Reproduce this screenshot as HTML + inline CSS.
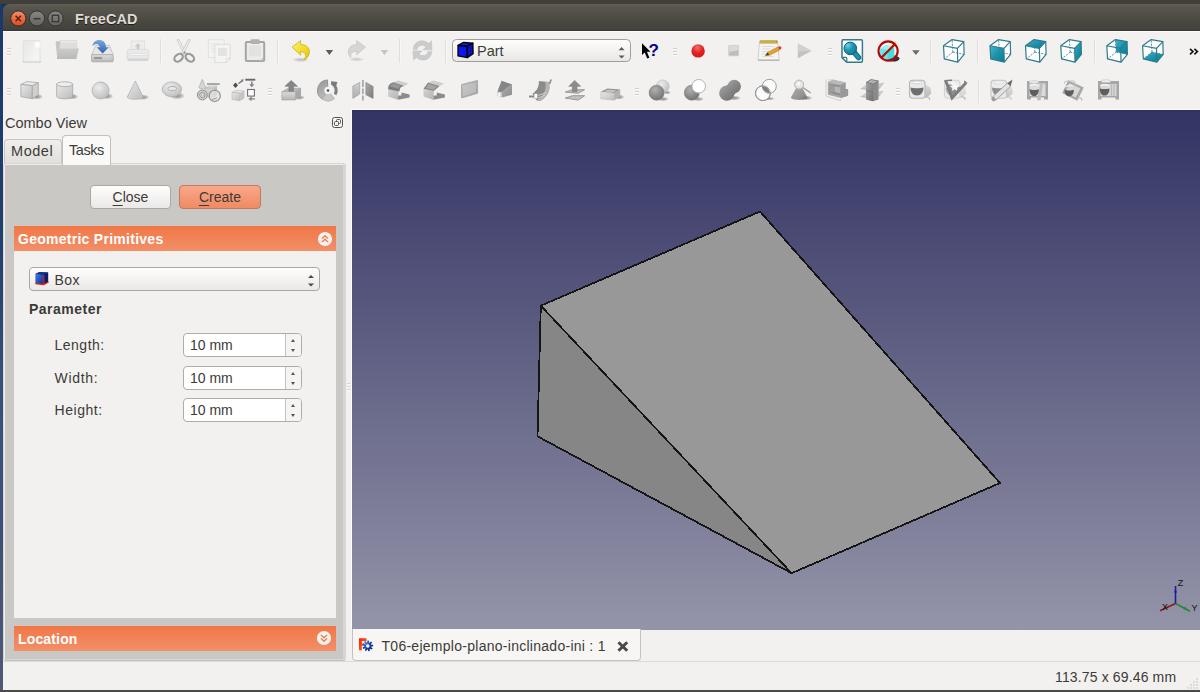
<!DOCTYPE html>
<html>
<head>
<meta charset="utf-8">
<title>FreeCAD</title>
<style>
html,body{margin:0;padding:0;}
body{width:1200px;height:692px;overflow:hidden;background:#f2f1f0;position:relative;font-family:"Liberation Sans","DejaVu Sans",sans-serif;font-size:14px;color:#3c3b37;}
.abs{position:absolute;}
#desk-top{left:0;top:0;width:1200px;height:12px;background:linear-gradient(#403f3a 0,#403f3a 4px,#1a2b4d 4px,#17325f 12px);}
#desk-left{left:0;top:4px;width:3px;height:688px;background:linear-gradient(#1a386a 0%,#21406f 35%,#34507e 55%,#3f5078 78%,#4e5a78 100%);}
#titlebar{left:3px;top:4px;width:1197px;height:27px;background:linear-gradient(#625f53 0,#5a574f 2px,#4d4b44 14px,#43423d 25px,#353430 27px);border-top-left-radius:6px;}
#title{left:75px;top:9.6px;font-weight:bold;font-size:14.4px;color:#dfdbd2;letter-spacing:0.15px;line-height:18px;text-shadow:0 1px 0 rgba(0,0,0,.6);}
.wbtn{width:15px;height:15px;border-radius:50%;top:11px;}
#win{left:3px;top:31px;width:1197px;height:659px;background:#f2f1f0;border-top:1px solid #fbfbfa;box-sizing:border-box;}
#desk-bottom{left:0;top:690px;width:1200px;height:2px;background:#4a4a48;}
/* 3D view */
#view{left:352px;top:110px;width:848px;height:519.500px;background:linear-gradient(#2e2e60 0,#333364 2px,#9494a9 100%);}
#viewborder{left:351px;top:109px;width:849px;height:520px;background:#fbfbfb;}
/* panel */
#frame{left:3px;top:163px;width:343px;height:498px;background:#d8d6d3;border-radius:3px;}
#frame2{left:4px;top:164px;width:339px;height:494.5px;background:#efeeed;border-radius:2px 0 0 0;}
#frame3{left:5px;top:165px;width:338px;height:493.5px;background:#cac8c5;}
#frame4{left:5px;top:660px;width:340px;height:1px;background:#c4c2bf;}
.hdr{left:14px;width:322px;height:25px;background:linear-gradient(#f07746 0%,#f38f68 100%);color:#fff;font-weight:bold;font-size:14px;line-height:24px;}
.hdr span{position:absolute;left:4px;top:1px;letter-spacing:.27px;}
#body1{left:14px;top:251px;width:322px;height:367px;background:#f2f1f0;}
.btn u{text-underline-offset:2.500px;text-decoration-thickness:1px;}
.btn{box-sizing:border-box;height:24px;border:1px solid #aba8a4;border-radius:4px;text-align:center;line-height:22px;font-size:14px;}
.lbl{font-size:14px;line-height:16px;white-space:nowrap;}
.spin{left:183px;width:119px;height:24px;box-sizing:border-box;border:1px solid #b0ada9;border-radius:4px;background:#fff;}
.spin i{position:absolute;right:0;top:0;width:15px;height:22px;border-left:1px solid #c4c1be;background:#f5f4f3;border-radius:0 3px 3px 0;}
.spin i:before{content:"";position:absolute;left:5px;top:5px;border:2.5px solid transparent;border-top:none;border-bottom:3px solid #55534f;}
.spin i:after{content:"";position:absolute;left:5px;top:15px;border:2.5px solid transparent;border-bottom:none;border-top:3px solid #55534f;}
.spin span{position:absolute;left:6px;top:3px;font-size:14px;line-height:16px;}
</style>
</head>
<body>
<div class="abs" id="desk-top"></div>
<div class="abs" id="desk-left"></div>
<div class="abs" id="titlebar"></div>
<div class="abs" id="win"></div>
<div class="abs" id="desk-bottom"></div>

<!-- window buttons -->
<svg class="abs" style="left:8px;top:8px" width="60" height="22" viewBox="0 0 60 22">
  <defs>
    <linearGradient id="gc" x1="0" y1="0" x2="0" y2="1"><stop offset="0" stop-color="#f58d6e"/><stop offset="1" stop-color="#de4c1c"/></linearGradient>
    <linearGradient id="gg" x1="0" y1="0" x2="0" y2="1"><stop offset="0" stop-color="#8a8984"/><stop offset="1" stop-color="#63625d"/></linearGradient>
  </defs>
  <circle cx="10.3" cy="10.5" r="7.6" fill="url(#gc)" stroke="#3a2a22" stroke-width="1"/>
  <path d="M7.6 7.8l5.4 5.4M13 7.8l-5.4 5.4" stroke="#5b2310" stroke-width="1.6" fill="none"/>
  <circle cx="29" cy="10.5" r="7.6" fill="url(#gg)" stroke="#33322e" stroke-width="1"/>
  <path d="M25.5 10.7h7" stroke="#3c3b37" stroke-width="1.6"/>
  <circle cx="47.5" cy="10.5" r="7.6" fill="url(#gg)" stroke="#33322e" stroke-width="1"/>
  <rect x="44.3" y="7.3" width="6.4" height="6.4" fill="none" stroke="#3c3b37" stroke-width="1.4"/>
</svg>
<div class="abs" id="title">FreeCAD</div>

<!-- TOOLBARS -->
<svg class="abs" style="left:0;top:31px" width="1200" height="79" viewBox="0 31 1200 79">
<defs>
  <linearGradient id="gL" x1="0" y1="0" x2="1" y2="1"><stop offset="0" stop-color="#e8e8e8"/><stop offset="1" stop-color="#bcbcbc"/></linearGradient>
  <linearGradient id="gV" x1="0" y1="0" x2="0" y2="1"><stop offset="0" stop-color="#dcdcdc"/><stop offset="1" stop-color="#b4b4b4"/></linearGradient>
  <linearGradient id="gM" x1="0" y1="0" x2="1" y2="1"><stop offset="0" stop-color="#c6c6c6"/><stop offset="1" stop-color="#959595"/></linearGradient>
  <linearGradient id="gD" x1="0" y1="0" x2="1" y2="1"><stop offset="0" stop-color="#a6a6a6"/><stop offset="1" stop-color="#6e6e6e"/></linearGradient>
  <radialGradient id="sL" cx=".38" cy=".32" r=".75"><stop offset="0" stop-color="#ececec"/><stop offset="1" stop-color="#bdbdbd"/></radialGradient>
  <radialGradient id="sD" cx=".4" cy=".3" r=".8"><stop offset="0" stop-color="#b0b0b0"/><stop offset="1" stop-color="#6c6c6c"/></radialGradient>
  <radialGradient id="sT" cx=".3" cy=".25" r=".9"><stop offset="0" stop-color="#6fd0ee"/><stop offset=".45" stop-color="#1f97b2"/><stop offset="1" stop-color="#0c7890"/></radialGradient>
  <radialGradient id="sR" cx=".45" cy=".25" r=".8"><stop offset="0" stop-color="#ee7070"/><stop offset=".5" stop-color="#e32424"/><stop offset="1" stop-color="#d81414"/></radialGradient>
  <radialGradient id="shd" cx=".5" cy=".5" r=".5"><stop offset="0" stop-color="#000" stop-opacity=".42"/><stop offset=".55" stop-color="#000" stop-opacity=".25"/><stop offset="1" stop-color="#000" stop-opacity="0"/></radialGradient>
  <linearGradient id="gPg" x1="0" y1="0" x2="1" y2="1"><stop offset="0" stop-color="#e6e6e6"/><stop offset="1" stop-color="#f8f8f7"/></linearGradient>
  <linearGradient id="gBl" x1="0" y1="0" x2="0" y2="1"><stop offset="0" stop-color="#7aa7dc"/><stop offset="1" stop-color="#2f62ab"/></linearGradient>
  <linearGradient id="gYl" x1="0" y1="0" x2="1" y2="1"><stop offset="0" stop-color="#f8f088"/><stop offset=".55" stop-color="#f0dc2c"/><stop offset="1" stop-color="#dcc210"/></linearGradient>
  <linearGradient id="gCb" x1="0" y1="0" x2="0" y2="1"><stop offset="0" stop-color="#fefefe"/><stop offset="1" stop-color="#e9e7e5"/></linearGradient>
  <linearGradient id="gFu" gradientUnits="userSpaceOnUse" x1="722" y1="82" x2="738" y2="100"><stop offset="0" stop-color="#a8a8a8"/><stop offset=".5" stop-color="#858585"/><stop offset="1" stop-color="#6a6a6a"/></linearGradient>
  <linearGradient id="gRv" gradientUnits="userSpaceOnUse" x1="318" y1="82" x2="328" y2="100"><stop offset="0" stop-color="#9a9a9a"/><stop offset="1" stop-color="#c2c2c2"/></linearGradient>
  <radialGradient id="glow" cx=".5" cy=".5" r=".5"><stop offset="0" stop-color="#fff" stop-opacity="1"/><stop offset=".45" stop-color="#fff" stop-opacity=".8"/><stop offset="1" stop-color="#fff" stop-opacity="0"/></radialGradient>
  <g id="hd"><rect x="0" y="0" width="4" height="1" fill="#d2cfcc"/><rect x="0" y="1" width="4" height="1" fill="#fafaf9"/><rect x="0" y="3" width="4" height="1" fill="#d2cfcc"/><rect x="0" y="4" width="4" height="1" fill="#fafaf9"/><rect x="0" y="6" width="4" height="1" fill="#d2cfcc"/><rect x="0" y="7" width="4" height="1" fill="#fafaf9"/></g>
  <g id="sp"><rect x="0" y="0" width="1" height="24" fill="#dfdedc"/><rect x="1" y="0" width="1" height="24" fill="#f8f7f6"/></g>
  <!-- cube wire: local coords origin at icon top-left -->
  <g id="cw" fill="none" stroke="#2f7b8b" stroke-width="1.200" stroke-linejoin="round">
    <path d="M11.6 13.1L10.8 .6M11.6 13.1L2.95 19.9M11.6 13.1L22.8 15.4" stroke-width=".9" stroke-dasharray="2 1.2" stroke="#3f8797"/>
    <path d="M2.2 6.75L16.1 9.4L16.45 23.1L2.95 19.9Z"/>
    <path d="M2.2 6.75L10.8 .6L22.45 2.6L16.1 9.4"/>
    <path d="M22.45 2.6L22.8 15.4L16.45 23.1"/>
  </g>
  <path id="cbg" d="M2.2 6.75L10.8 .6L22.45 2.6L22.8 15.4L16.45 23.1L2.95 19.9Z" fill="#fff"/>
  <linearGradient id="gT" x1="0" y1="0" x2="1" y2="1"><stop offset="0" stop-color="#45b4d2"/><stop offset=".5" stop-color="#1a93ae"/><stop offset="1" stop-color="#0b7b93"/></linearGradient>
</defs>

<!-- ================= TOOLBAR 1 ================= -->
<use href="#hd" x="7" y="48"/>
<use href="#hd" x="673" y="48"/>
<use href="#hd" x="828" y="48"/>
<use href="#sp" x="160" y="39"/><use href="#sp" x="277" y="39"/><use href="#sp" x="399" y="39"/><use href="#sp" x="445" y="39"/>
<use href="#sp" x="930" y="39"/><use href="#sp" x="977" y="39"/><use href="#sp" x="1094" y="39"/>

<!-- new -->
<g>
  <rect x="22.5" y="61" width="18.5" height="1.6" rx=".8" fill="#c9c9c9"/>
  <rect x="23.4" y="40.6" width="16.6" height="20.8" rx="1" fill="url(#gPg)" stroke="#dedede" stroke-width=".9"/>
  <circle cx="37.600" cy="44.800" r="4.200" fill="url(#glow)"/>
</g>
<!-- open -->
<g>
  <path d="M55.6 42.2q0-1 1-1h4l1 1.4h15v15H57.2z" fill="#c6c5c3"/>
  <path d="M60.6 40.6h16.2v9h-17z" fill="#ececeb" stroke="#d2d2d0" stroke-width=".7"/>
  <path d="M61.5 42.5h14.5v6h-15z" fill="#dededd"/>
  <path d="M59.4 48.4h19.4l-2.6 10.6H56.9z" fill="url(#gV)"/>
  <path d="M59.4 48.4h19.4l-2.6 10.6H56.9z" fill="#bebdbb" opacity=".55"/>
</g>
<!-- save -->
<g>
  <path d="M95.8 45.4h13.6l3.8 9.4H91.6z" fill="#e7e7e7" stroke="#bdbdbd" stroke-width=".8"/>
  <rect x="91.5" y="54.6" width="21.8" height="7.2" rx="1.2" fill="url(#gV)" stroke="#a9a9a9" stroke-width=".8"/>
  <rect x="94" y="57" width="8" height="2" fill="#9a9a9a"/>
  <path d="M104 56v4M106.5 56v4M109 56v4" stroke="#d6d6d6" stroke-width="1"/>
  <path d="M92.3 46.6c.3-4 3.4-6.6 7-6.6 4.6 0 6.600 3.400 6.700 7.200h2.800l-6.200 6.400-6-6.400h3c0-2-1.200-3.300-3-3.300-2 0-3.400 1.100-4.300 2.700z" fill="url(#gBl)"/>
</g>
<!-- print -->
<g>
  <rect x="131.2" y="41" width="13.4" height="10" fill="#ededed" stroke="#dcdcdc" stroke-width=".8"/>
  <path d="M137.900 43.300l3.100 3.200h-1.900v3h-2.400v-3h-1.900z" fill="#c8c8c8"/>
  <rect x="127" y="49.400" width="21.800" height="11.200" rx="2.600" fill="#e9e9e9" stroke="#d7d7d7" stroke-width=".8"/>
  <rect x="129" y="53.600" width="17.800" height="2" rx="1" fill="#f8f8f8" stroke="#d4d4d4" stroke-width=".6"/>
  <rect x="127.600" y="58.600" width="20.600" height="2.200" rx="1.100" fill="#d2d2d2"/>
</g>
<!-- cut -->
<g>
  <path d="M177 39.800l2-.4 7.400 14-2.200 1.200z" fill="#ececec" stroke="#c4c4c4" stroke-width=".7"/>
  <path d="M190.400 39.800l-2-.4-7.400 14 2.200 1.200z" fill="#ececec" stroke="#c4c4c4" stroke-width=".7"/>
  <ellipse cx="178.600" cy="57.800" rx="4.700" ry="3.300" transform="rotate(-38 178.600 57.800)" fill="none" stroke="#9a9a9a" stroke-width="2.200"/>
  <ellipse cx="189.800" cy="57.800" rx="4.700" ry="3.300" transform="rotate(38 189.800 57.800)" fill="none" stroke="#9a9a9a" stroke-width="2.200"/>
  <circle cx="184.400" cy="52.600" r="1" fill="#8a8a8a"/>
</g>
<!-- copy -->
<g>
  <rect x="208.400" y="39.700" width="15.800" height="17.800" rx=".8" fill="#f3f3f2" stroke="#dddddc" stroke-width=".8"/>
  <path d="M211 44h9M211 46.500h9M211 49h9M211 51.500h9" stroke="#e4e4e3" stroke-width="1"/>
  <path d="M214.800 44.300h15.400v14l-4 4.200h-11.400z" fill="#f4f4f3" stroke="#d8d8d7" stroke-width=".8"/>
  <rect x="218" y="48" width="9" height="8" fill="#e3e3e2"/>
  <path d="M230.200 58.300l-4 4.200v-4.200z" fill="#fbfbfb" stroke="#d0d0cf" stroke-width=".7"/>
</g>
<!-- paste -->
<g>
  <rect x="245.800" y="42" width="18.400" height="19" rx="1" fill="#ececeb" stroke="#a5a5a5" stroke-width="2"/>
  <rect x="250.600" y="39.300" width="9" height="4.600" rx="1" fill="#b1b1b1"/>
  <rect x="249" y="45.500" width="12" height="11" fill="#e2e2e1"/>
  <path d="M263 57.400v3.400h-3.600z" fill="#c6c6c6"/>
</g>
<!-- undo -->
<g>
  <ellipse cx="300.500" cy="59.800" rx="8.500" ry="2.400" fill="url(#shd)" opacity=".5"/>
  <path d="M292 47.200l8.700-6.600v3.900c5.600.1 8.900 3.300 8.700 7.500-.1 3.800-2.500 6.700-5.900 8.100 1.700-1.700 2.400-3.400 2.100-5-.4-2.200-2.200-3.400-4.900-3.400v3.500z" fill="url(#gYl)" stroke="#cdb40c" stroke-width=".8" stroke-linejoin="round"/>
</g>
<path d="M325.700 50h7.400l-3.700 5z" fill="#5d5c58"/>
<!-- redo -->
<g>
  <ellipse cx="356.500" cy="59.300" rx="8" ry="2.200" fill="url(#shd)" opacity=".4"/>
  <path d="M365.400 47.200l-8.700-6.600v3.900c-5.200.1-8.200 3.100-8.300 7.100-.1 2.700.9 4.700 2.500 6.100-.3-1.500-.2-3 .6-4.200 1-1.500 2.700-2.200 5.200-2.200v3.500z" fill="#d5d5d5" stroke="#c8c8c8" stroke-width=".8" stroke-linejoin="round"/>
</g>
<path d="M380.700 50h7.400l-3.700 5z" fill="#c6c4c1"/>
<!-- refresh -->
<g fill="#cbcbcb" stroke="#bebebe" stroke-width=".5" stroke-linejoin="round">
  <path d="M413.200 49.600c.2-5 3.800-8.800 8.800-8.800 2.800 0 5 1 6.600 2.600l2.800-2.600.6 9h-9l3-2.900c-1-1.100-2.400-1.700-4-1.700-2.700 0-4.500 1.800-5 4.400z"/>
  <path d="M431.800 51.400c-.2 5-3.800 8.600-8.800 8.600-2.800 0-5-1-6.600-2.600l-2.800 2.600-.6-9h9l-3 2.900c1 1.100 2.400 1.700 4 1.700 2.700 0 4.500-1.600 5-4.200z"/>
</g>
<!-- workbench combo -->
<g>
  <rect x="452.500" y="39.500" width="178" height="22" rx="4" fill="url(#gCb)" stroke="#a19e9a"/>
  <path d="M458 45.400l9.200.6.100 11.600-9.300-1.700z" fill="#0a16f0" stroke="#000" stroke-width="1.300" stroke-linejoin="round"/>
  <path d="M458 45.400l5.600-3.100 9.300.9-5.700 2.800z" fill="#0c1ad8" stroke="#000" stroke-width="1.300" stroke-linejoin="round"/>
  <path d="M467.200 46l5.700-2.800.2 10.500-5.800 3.900z" fill="#0712b4" stroke="#000" stroke-width="1.300" stroke-linejoin="round"/>
  <text x="477" y="55.900" font-family="Liberation Sans, DejaVu Sans, sans-serif" font-size="14.500" fill="#3c3b37">Part</text>
  <path d="M618.600 50.200l3-3.200 3 3.200zM618.600 55.400l3 3.200 3-3.200z" fill="#5d5c58"/>
</g>
<!-- whats this -->
<g>
  <path d="M642 43.200v11.900l2.700-2.500 2.500 6 2.200-.9-2.500-5.900h3.600z" fill="#000"/>
  <text x="648.600" y="55.800" font-family="Liberation Sans, DejaVu Sans, sans-serif" font-weight="bold" font-size="17" fill="#00008b">?</text>
</g>
<!-- record -->
<circle cx="698.100" cy="50.900" r="6.700" fill="url(#sR)"/>
<!-- stop -->
<g>
  <rect x="728.600" y="45.400" width="10" height="10.400" rx=".8" fill="#d9d9d9" stroke="#cdcdcd" stroke-width=".8"/>
  <path d="M729.200 52l9-1.800v5.200h-9z" fill="#bdbdbd"/>
</g>
<!-- macro edit -->
<g>
  <path d="M759.400 42.500h18.400l1.400 17.600h-21.200z" fill="#f4f4f3" stroke="#c6c6c4" stroke-width=".8"/>
  <path d="M758 59.600h21.200v1.300h-21.200z" fill="#b4b4b2"/>
  <rect x="759.600" y="40.200" width="18" height="3.300" rx=".8" fill="#b39a2c"/>
  <path d="M761 40.400v2.800M763 40.400v2.800M765 40.400v2.800M767 40.400v2.800M769 40.400v2.800M771 40.400v2.800M773 40.400v2.800M775 40.400v2.800" stroke="#e6d26a" stroke-width=".8"/>
  <path d="M762 46.500h12M762 49h8M762 51.500h7M762 54h5M762 56.500h12" stroke="#dcdcdb" stroke-width="1"/>
  <path d="M765.400 55.600l2.400-3.400 10.200-5.200 1.700 2.900-10.100 5.400z" fill="#e2a332" stroke="#b57a18" stroke-width=".6"/>
  <path d="M765.400 55.600l2.400-3.400 1.300 2.800z" fill="#4a3a24"/>
  <path d="M778 47l1.500-.8q1-.3 1.500.6l.4.800q.3.900-.5 1.400l-1.200.9z" fill="#e23a3a"/>
</g>
<!-- play -->
<path d="M798.100 43.800v14.200l12.900-7.300z" fill="#d1d1d1" stroke="#c6c6c6" stroke-width=".6"/>
<path d="M798.100 51.500l12.900-.8-12.900 7.300z" fill="#c2c2c2"/>
<!-- zoom fit -->
<g>
  <path d="M842.600 39.800h18.600q1.200 0 1.200 1.200v20q0 1.200-1.200 1.200h-14.400l-4.800-4.600v-16.600q0-1.200 1.200-1.200z" fill="#fff" stroke="#35798a" stroke-width="1.500" stroke-linejoin="round"/>
  <path d="M842.400 57.400h3.400q1 0 1 1v3.400" fill="none" stroke="#35798a" stroke-width="1.200"/>
  <path d="M854.500 52.800l4 4.800" stroke="#0e6478" stroke-width="5.400" stroke-linecap="round"/>
  <path d="M854.500 52.800l4 4.800" stroke="#1d94ae" stroke-width="3.400" stroke-linecap="round"/>
  <circle cx="850.300" cy="48.400" r="6.300" fill="url(#sT)" stroke="#0e6074" stroke-width="1"/>
</g>
<!-- draw style -->
<g>
  <ellipse cx="893" cy="58.600" rx="6.500" ry="3" fill="#111" opacity=".85"/>
  <path d="M880.400 48.600l6-3.600 7.800 2.400v9.800l-6.600 2.800-7.200-3.600z" fill="#42dede"/>
  <path d="M880.400 48.600l6-3.600 7.800 2.400-6.600 2.800z" fill="#9ff0f0"/>
  <path d="M880.400 48.600l7.200 1.600v9.800l-7.200-3.600z" fill="#6ae6e6"/>
  <path d="M887.400 50.300l6-7.400 2.600-1.700-.8 3-6 7.400z" fill="#f0dc28"/>
  <circle cx="888.100" cy="51" r="9.600" fill="none" stroke="#b40808" stroke-width="2.100"/>
  <path d="M881.300 57.800l13.600-13.600" stroke="#b40808" stroke-width="2.100"/>
</g>
<path d="M912.100 50.200h7.600l-3.800 4.800z" fill="#6a6966"/>
<!-- view cubes -->
<g transform="translate(941.300 39)"><use href="#cbg"/><use href="#cw"/></g>
<g transform="translate(987.800 39)"><use href="#cbg"/><path d="M2.200 6.750L16.100 9.400L16.450 23.100L2.950 19.900Z" fill="url(#gT)"/><use href="#cw"/></g>
<g transform="translate(1023.300 39)"><use href="#cbg"/><path d="M2.200 6.750L10.800 .6L22.450 2.600L16.100 9.400Z" fill="url(#gT)"/><use href="#cw"/></g>
<g transform="translate(1058.600 39)"><use href="#cbg"/><path d="M16.100 9.400L22.450 2.600L22.800 15.400L16.450 23.100Z" fill="url(#gT)"/><use href="#cw"/></g>
<g transform="translate(1104.600 39)"><use href="#cbg"/><path d="M10.800 .6L22.450 2.600L22.800 15.400L11.600 13.100Z" fill="url(#gT)"/><use href="#cw"/></g>
<g transform="translate(1140.400 39)"><use href="#cbg"/><path d="M2.950 19.900L11.600 13.100L22.800 15.400L16.450 23.100Z" fill="url(#gT)"/><use href="#cw"/></g>
<!-- chevrons -->
<path d="M1190 48.800l3 2.800-3 2.800M1194.400 48.800l3 2.800-3 2.800" fill="none" stroke="#111" stroke-width="1.600"/>
<!-- ================= TOOLBAR 2 ================= -->
<use href="#hd" x="7" y="88"/><use href="#hd" x="268" y="88"/><use href="#hd" x="635" y="88"/><use href="#hd" x="896" y="88"/>
<use href="#sp" x="978" y="79"/>
<!-- box -->
<g>
  <ellipse cx="36.500" cy="96.600" rx="6.500" ry="3" fill="url(#shd)"/>
  <path d="M20.900 84.500l5.900-2.900 11.500 1.100-6 2.900z" fill="#ececec" stroke="#a4a4a4" stroke-width=".8" stroke-linejoin="round"/>
  <path d="M20.900 84.500l11.400 1.100v13.200l-11.400-2.200z" fill="url(#gL)" stroke="#a4a4a4" stroke-width=".8" stroke-linejoin="round"/>
  <path d="M32.300 85.600l6-2.900v12l-6 4.100z" fill="#cfcfcf" stroke="#a4a4a4" stroke-width=".8" stroke-linejoin="round"/>
</g>
<!-- cylinder -->
<g>
  <ellipse cx="72" cy="96.600" rx="6.500" ry="3" fill="url(#shd)"/>
  <path d="M56.700 84.200v12c0 1.500 3.600 2.600 8 2.600s8-1.100 8-2.600v-12z" fill="url(#gL)" stroke="#a4a4a4" stroke-width=".8"/>
  <ellipse cx="64.700" cy="84.200" rx="8" ry="2.400" fill="#ededed" stroke="#a4a4a4" stroke-width=".8"/>
</g>
<!-- sphere -->
<g>
  <ellipse cx="106.500" cy="96.200" rx="7" ry="3.200" fill="url(#shd)"/>
  <circle cx="100.600" cy="90.500" r="8.500" fill="url(#sL)" stroke="#b0b0b0" stroke-width=".8"/>
</g>
<!-- cone -->
<g>
  <ellipse cx="142.500" cy="97.200" rx="7" ry="2.800" fill="url(#shd)"/>
  <path d="M135.400 81l-8.200 16.100c0 1.200 3.600 2.200 8 2.200s8-1 8-2.200z" fill="url(#gL)" stroke="#b2b2b2" stroke-width=".8" stroke-linejoin="round"/>
</g>
<!-- torus -->
<g>
  <ellipse cx="177" cy="95.800" rx="8" ry="3.600" fill="url(#shd)"/>
  <ellipse cx="171.900" cy="89.300" rx="9.700" ry="7.400" fill="url(#sL)" stroke="#b0b0b0" stroke-width=".8"/>
  <ellipse cx="172.200" cy="88.600" rx="4.300" ry="2.100" fill="#e6e6e6" stroke="#a8a8a8" stroke-width=".9"/>
</g>
<!-- primitives -->
<g>
  <path d="M207 84h12.800" stroke="#8a8a8a" stroke-width="1.400"/>
  <path d="M205 88l4-2h8l-3 2z" fill="#e4e4e4" stroke="#b5b5b5" stroke-width=".6"/>
  <path d="M205 88h9v9h-9z" fill="#d2d2d2" stroke="#b5b5b5" stroke-width=".6"/>
  <path d="M214 88l3-2v9l-3 2z" fill="#bdbdbd"/>
  <path d="M202.300 79.400l-3.400 8c0 .8 1.500 1.400 3.400 1.400s3.400-.6 3.400-1.400z" fill="#d6d6d6" stroke="#ababab" stroke-width=".7"/>
  <circle cx="202.300" cy="95" r="4.900" fill="#d0d0d0" stroke="#8e8e8e" stroke-width="1"/>
  <circle cx="202.300" cy="95" r="2.700" fill="#e6e6e6" stroke="#8e8e8e" stroke-width=".9"/>
  <rect x="201.300" y="94" width="2" height="2" fill="#fff" stroke="#8e8e8e" stroke-width=".5"/>
  <circle cx="214.700" cy="95.900" r="5.600" fill="#e2e2e2" fill-opacity=".75" stroke="#8c8c8c" stroke-width="1.100"/>
  <path d="M212 99.500l5-1.500" stroke="#a0a0a0" stroke-width="1.200"/>
</g>
<!-- builder -->
<g>
  <path d="M232 92.400l4.400-2.100 8 .7-4.300 2.200z" fill="#e8e8e8" stroke="#b5b5b5" stroke-width=".6"/>
  <path d="M232 92.400l8.100.8v7.600l-8.100-1.300z" fill="url(#gL)" stroke="#b5b5b5" stroke-width=".6"/>
  <path d="M240.100 93.200l4.300-2.200v7.400l-4.300 2.400z" fill="#c4c4c4"/>
  <path d="M235.500 82.600l2.500 2.700-2.500 2.700-2.500-2.700z" fill="#4e4e4e"/>
  <path d="M238.400 83.600l4.200-3" stroke="#7a7a7a" stroke-width="1.300"/>
  <path d="M240.800 79.800l3-.6-1.300 2.700z" fill="#7a7a7a"/>
  <path d="M245.300 79.700h10" stroke="#686868" stroke-width="1.900"/>
  <path d="M251.800 81.500v3.200" stroke="#808080" stroke-width="1.500"/>
  <path d="M249.300 84.300h5l-2.500 3z" fill="#808080"/>
  <rect x="247.600" y="89.500" width="6.800" height="6.600" fill="#fdfdfd" stroke="#707070" stroke-width="1.100"/>
  <path d="M251 96.400v2.400" stroke="#8a8a8a" stroke-width="1.300"/>
  <path d="M255 98.900h-4" stroke="#8a8a8a" stroke-width="1.300"/>
  <path d="M251.600 96.900l-3.400 2 3.400 2z" fill="#8a8a8a"/>
</g>
<!-- extrude -->
<g>
  <ellipse cx="299" cy="97.500" rx="6" ry="2.400" fill="url(#shd)"/>
  <path d="M281.800 91.800l6.600-3.600h12.600l-5.600 3.600z" fill="#b8b8b8" stroke="#9c9c9c" stroke-width=".6"/>
  <path d="M281.800 91.800h13.600v8.200h-13.600z" fill="url(#gV)" stroke="#a2a2a2" stroke-width=".6"/>
  <path d="M295.400 91.800l5.600-3.600v8l-5.600 3.800z" fill="#a8a8a8"/>
  <path d="M291.200 80.400l6.300 5.900h-4v5h-4.600v-5h-4z" fill="#868686" stroke="#7a7a7a" stroke-width=".6" stroke-linejoin="round"/>
</g>
<!-- revolve -->
<g>
  <path d="M328.0 90.4L327.45 79.91A10.5 10.5 0 0 0 322.13 99.10Z" fill="url(#gRv)" stroke="#8a8a8a" stroke-width=".8" stroke-linejoin="round"/>
  <path d="M328.0 90.4L322.13 99.10A10.5 10.5 0 0 0 334.46 98.67Z" fill="#c6c6c6" stroke="#a8a8a8" stroke-width=".7" stroke-linejoin="round"/>
  <circle cx="328.0" cy="90.4" r="3.600" fill="#f6f6f5"/>
  <circle cx="328.0" cy="90.5" r="1.250" fill="#4c4c4c"/>
  <path d="M331.85 83.16A8.200 8.200 0 0 1 335.10 94.50" fill="none" stroke="#7e7e7e" stroke-width="3"/>
  <path d="M331 81.200l6.400 .800-1.400 4.400-4.600-1.600z" fill="#7a7a7a"/>
</g>
<!-- mirror -->
<g>
  <path d="M352.800 86.100l6.900-3.700v11.700l-6.900 4.300z" fill="url(#gV)" stroke="#a6a6a6" stroke-width=".7" stroke-linejoin="round"/>
  <path d="M352.800 86.100l6.900-3.700v11.700l-6.900 4.300z" fill="#999" opacity=".2"/>
  <path d="M365.900 82.400l7.200 4v12l-7.200-3.700z" fill="url(#gD)" stroke="#7e7e7e" stroke-width=".7" stroke-linejoin="round" opacity=".9"/>
  <path d="M362.900 80v7M362.900 88.500v5.500M362.900 95.500v5" stroke="#a2a2a2" stroke-width="1.600"/>
</g>
<!-- fillet -->
<g>
  <path d="M393.400 82.200l4.800-1.800 10.400 3-4.400 2.600z" fill="#cdcdcd"/>
  <path d="M401.400 92.400l8.200 2v3.200l-11.600 2.200v-4.200h3.400z" fill="#8b8b8b"/>
  <path d="M388.200 88.800l10.300 2.200-.5 8.800-9.800-3.200z" fill="url(#gL)"/>
  <path d="M388.200 88.800l10.300 2.200-.5 8.800-9.800-3.200z" fill="#999" opacity=".25"/>
  <path d="M388.200 89.200c-.3-3.400 1.600-6.200 5.200-7l10.800 3.800c-3 .4-4.800 2-4.700 5.400z" fill="#7c7c7c"/>
  <path d="M389.600 86.600c.8-2 2.200-3 4.200-3.400l8 2.800c-1.600.6-2.600 1.400-3.200 2.800z" fill="#9d9d9d" opacity=".8"/>
</g>
<!-- chamfer -->
<g>
  <path d="M428.700 82.200l4.800-1.800 10.400 3-4.400 2.600z" fill="#cdcdcd"/>
  <path d="M436.700 92.400l8.200 2v3.200l-11.600 2.200v-4.200h3.400z" fill="#8b8b8b"/>
  <path d="M423.500 88.800l10.300 2.200-.5 8.800-9.800-3.200z" fill="url(#gL)"/>
  <path d="M423.500 88.800l10.300 2.200-.5 8.800-9.800-3.200z" fill="#999" opacity=".25"/>
  <path d="M423.500 88.800l4.600-6.400 11.400 3.600-5.700 5z" fill="#858585"/>
  <path d="M425.600 88l3-4.200 8.600 2.800-3.800 3.200z" fill="#a4a4a4"/>
</g>
<!-- face -->
<path d="M461.500 84.500l16.100-4.100v12.900l-16.100 4.700z" fill="url(#gM)" stroke="#a4a4a4" stroke-width=".8" stroke-linejoin="round"/>
<path d="M463 85.800l13.200-3.400v10l-13.200 3.900z" fill="#cfcfcf" opacity=".5"/>
<!-- loft -->
<g>
  <path d="M501.600 80.800l10.400 3.500-10.200 7.900-4.500-.4z" fill="#858585"/>
  <path d="M512 84.300v10.400l-10.300 2.700v-5.200z" fill="url(#gM)"/>
  <path d="M512 84.300v10.400l-10.300 2.700v-5.200z" fill="#888" opacity=".45"/>
  <path d="M497.300 91.600l4.400.6v5.200l-4.400-1.400z" fill="#cdcdcd"/>
  <rect x="498.300" y="93" width="1.900" height="3.300" fill="#fdfdfd"/>
</g>
<!-- sweep -->
<g>
  <path d="M551.200 79.500l-1.900 4.600" stroke="#929292" stroke-width="1.800"/>
  <path d="M538.900 81l9.600.9c2.600 6.600.2 13.600-8.300 19.100l-3.800-.8-3.900-6.500c4.800-3.200 6.600-7.300 6.400-12.700z" fill="#8b8b8b"/>
  <path d="M548.500 81.900c2.600 6.600.2 13.600-8.300 19.100l-3.500-.7c7.200-4.800 10-10.800 8.600-18.600z" fill="#b4b4b4"/>
  <path d="M537.500 95.500l9-2.800M537.500 98l7.500-2.800" stroke="#d0d0d0" stroke-width=".9"/>
  <path d="M529 96.500h5.500" stroke="#858585" stroke-width="1.900"/>
  <rect x="534.100" y="93.700" width="3.200" height="5" fill="#fdfdfd" stroke="#9c9c9c" stroke-width=".5"/>
</g>
<!-- offset -->
<g>
  <path d="M565.300 92.100l7-2.400h12.300l-6.400 3.600z" fill="#c0c0c0" stroke="#929292" stroke-width=".9" stroke-linejoin="round"/>
  <path d="M565.300 98.100l7-2.400h12.300l-6.400 4.400z" fill="#c0c0c0" stroke="#929292" stroke-width=".9" stroke-linejoin="round"/>
  <path d="M574.700 80.400l5.900 5.900h-3.600v5.400h-4.600v-5.400h-3.600z" fill="#8c8c8c" stroke="#7c7c7c" stroke-width=".6" stroke-linejoin="round"/>
</g>
<!-- thickness -->
<g>
  <ellipse cx="619" cy="97" rx="5.500" ry="2.600" fill="url(#shd)"/>
  <path d="M600.900 91.800l6.500-3.200 12.800 1-5.900 3.400z" fill="#8e8e8e"/>
  <path d="M603.600 91.600l4.200-2 9 .7-3.700 2.200z" fill="#c2c2c2"/>
  <path d="M600.900 91.800l13.400 1.200v7.200l-13.400-1.400z" fill="url(#gL)" stroke="#b0b0b0" stroke-width=".5"/>
  <path d="M614.300 93l5.900-3.400v6.600l-5.900 4z" fill="#b2b2b2"/>
</g>
<!-- boolean -->
<g>
  <ellipse cx="667" cy="92.500" rx="4" ry="1.800" fill="url(#shd)"/>
  <ellipse cx="663" cy="99" rx="6" ry="2.200" fill="url(#shd)"/>
  <circle cx="662.800" cy="86.300" r="6.400" fill="url(#sL)" stroke="#bcbcbc" stroke-width=".6"/>
  <circle cx="656.600" cy="92.700" r="7.500" fill="url(#sD)" stroke="#7c7c7c" stroke-width=".6"/>
</g>
<!-- cut -->
<g>
  <ellipse cx="698" cy="99" rx="6" ry="2.200" fill="url(#shd)"/>
  <circle cx="691.800" cy="92.700" r="7.500" fill="url(#sD)" stroke="#7c7c7c" stroke-width=".6"/>
  <circle cx="698.700" cy="86.300" r="6.800" fill="#fff" stroke="#a9a9a9" stroke-width=".9"/>
</g>
<!-- fuse -->
<g>
  <ellipse cx="734" cy="98" rx="7" ry="2.400" fill="url(#shd)"/>
  <g fill="url(#gFu)" stroke="url(#gFu)"><circle cx="734.200" cy="86.400" r="6.700" stroke="none"/><circle cx="726.800" cy="93.200" r="7.600" stroke="none"/><path d="M729.500 88.500l2.500 2.500" stroke-width="8.500" stroke-linecap="round" fill="none"/></g>
</g>
<!-- common -->
<g>
  <ellipse cx="769" cy="98.600" rx="6" ry="1.800" fill="url(#shd)"/>
  <circle cx="762.900" cy="93.200" r="7.400" fill="#fbfbfb" stroke="#929292" stroke-width=".9"/>
  <circle cx="769.300" cy="86.300" r="7" fill="#fbfbfb" stroke="#929292" stroke-width=".9"/>
  <path d="M762.400 85.900a7.400 7.400 0 0 1 7.400 7 7 7 0 0 1-7.400-7z" fill="#7e7e7e"/>
  <circle cx="762.900" cy="93.200" r="7.400" fill="none" stroke="#929292" stroke-width=".9"/>
</g>
<!-- check geometry -->
<g>
  <ellipse cx="806" cy="98" rx="6.500" ry="2.400" fill="url(#shd)"/>
  <path d="M797.200 86l-6.300 11.600c0 1.400 3.700 2.400 8.200 2.400s8.400-1 8.400-2.400l-6.300-11.600z" fill="url(#gD)" opacity=".85"/>
  <path d="M802.600 87.400l8 5.400" stroke="#a4a4a4" stroke-width="1.500"/>
  <circle cx="799.100" cy="84.600" r="4.500" fill="#e4e4e4" stroke="#b4b4b4" stroke-width="1"/>
  <circle cx="798.600" cy="84" r="2" fill="#f6f6f6"/>
</g>
<!-- section -->
<g>
  <path d="M826 80v16l14.700 4.800v-1.800" fill="none" stroke="#cfcfcf" stroke-width="1"/>
  <path d="M826 80l8-.5" fill="none" stroke="#d6d6d6" stroke-width=".8"/>
  <path d="M827.900 81.900l5.100-2.100 12.500 2.800v6.400l2.600.3v6.400l-7.400 2.300-12.800-3.300z" fill="#a6a6a6"/>
  <path d="M827.900 81.900l5.100-2.100 12.500 2.800-5 2.400z" fill="#bababa"/>
  <path d="M829.200 84l10.800 1.600v10l-10.800-2.800z" fill="#8c8c8c"/>
  <path d="M834.400 86.200l5.600.8v6.400l-5.600-1.600z" fill="#b6b6b6"/>
  <path d="M829.200 84l5.200 2.200v5.600l-5.200 1z" fill="#9c9c9c"/>
  <path d="M840.500 85l5-2.400v6.400l2.600.3v6.400l-7.400 2.300z" fill="#999"/>
</g>
<!-- cross sections -->
<g>
  <path d="M860.700 88.500l5.600-4 17.600-1.800-3.800 4.800-8 3z" fill="#c2c2c2" opacity=".8"/>
  <path d="M860.700 96.500l5.600-4 17.600-1.800-3.800 4.800-8 3z" fill="#c2c2c2" opacity=".8"/>
  <path d="M860.700 88.500l11.400 2 8-3M860.700 96.500l11.400 2 8-3" fill="none" stroke="#a4a4a4" stroke-width=".6"/>
  <path d="M866.300 82.400l4.800-2.900 7.400 1.500v18.500l-5.300 1.800-6.900-1.800z" fill="#8a8a8a"/>
  <path d="M866.300 82.400l6.900 1.600v17.300l-6.900-1.800z" fill="url(#gD)"/>
  <path d="M866.300 82.400l4.800-2.900 7.400 1.500-5.300 3z" fill="#b2b2b2" stroke="#6e6e6e" stroke-width=".7" stroke-linejoin="round"/>
  <path d="M866.300 90.600l6.900 1.600 5.300-2.400" fill="none" stroke="#747474" stroke-width=".7"/>
  <path d="M873.200 92.200l5.300-2.400 5.400-7.100" fill="none" stroke="#aaa" stroke-width=".5"/>
</g>
<!-- ray 1 -->
<g id="cup">
  <path d="M924.600 83.800l5.800 3.600.9 6-5.800 5z" fill="url(#gV)"/>
  <path d="M926 96.600l3.200 1 .6 2.200" fill="none" stroke="#bcbcbc" stroke-width="1.200"/>
  <path d="M912.500 80.300h9.500q3 0 3 3v11.500q0 3.500-3 3.500h-9q-3.500 0-3.500-3.500v-11.500q0-3 3-3z" fill="#e9e9e9" stroke="#b6b6b6" stroke-width="1.100"/>
  <ellipse cx="917" cy="82.400" rx="5.200" ry="1.500" fill="#f8f8f8" stroke="#c6c6c6" stroke-width=".7"/>
  <path d="M910.600 87.600c2.200 1 10.600 1 12.800 0 .2 4.600-2.400 8-6.400 8s-6.600-3.400-6.400-8z" fill="#6e6e6e"/>
</g>
<!-- ray 2 -->
<g>
  <use href="#cup" x="35" y="0" opacity=".5"/>
  <path d="M947.500 84l4.500 13.500 9-10.500z" fill="#8e8e8e"/>
  <path d="M951 82.500l3 1.500 2-1.600.5 3 3 .5-2.500 2 .5 3-3-1.600-2.600 1.800.4-3.200-2.600-1.800 3-.6z" fill="#f6f6f6"/>
  <path d="M945.600 80.600l6.400 17.600 13.800-15.200" fill="none" stroke="#7c7c7c" stroke-width="2.800" stroke-linejoin="miter"/>
  <path d="M944.400 80.600l7.600-.4M967 83.600l-2.800-2.600" stroke="#7c7c7c" stroke-width="1.400"/>
  <path d="M961 96.500l3.500 1 .6 2.200" fill="none" stroke="#bcbcbc" stroke-width="1.200"/>
</g>
<!-- ray 3 -->
<g>
  <use href="#cup" x="81.500" y="0" opacity=".75"/>
  <path d="M993 96.500l14.400-13.400 3.200 3.200-14.400 13.600z" fill="#e2e2e2" stroke="#929292" stroke-width=".8"/>
  <path d="M1007.400 83.100l5.200-3.600-2 6.800z" fill="#6a6a6a"/>
  <path d="M993 96.500l3.200 3.400-1.600 1.200q-1.200.6-2.200-.4l-.8-.9q-.8-1.100.2-2.100z" fill="#9a9a9a"/>
</g>
<!-- ray 4 -->
<g>
  <path d="M1027 81h21v18.500h-4v-2h-13v2h-4z" fill="#a6a6a6"/>
  <path d="M1029.500 83.500h16v12.500h-16z" fill="#dcdcdc"/>
  <ellipse cx="1034" cy="82" rx="5" ry="1.400" fill="#eaeaea" stroke="#c0c0c0" stroke-width=".5"/>
  <path d="M1040.500 83l-3.500 17 3.500 .5 2.500-17.500z" fill="#bdbdbd"/>
  <path d="M1029.600 89.200c2 .9 7.400 .9 9.200 0 .2 3.800-1.600 6.800-4.600 6.800s-4.800-3-4.600-6.800z" fill="#5e5e5e"/>
  <path d="M1030 86q4-3 8 0" fill="none" stroke="#f4f4f4" stroke-width="1.400"/>
</g>
<!-- ray 5 -->
<g>
  <path d="M1062.200 93l6-12.800 15.600 7.200-6.600 13.400z" fill="#a8a8a8"/>
  <path d="M1065.200 92.200l4.400-9 10.800 5-4.800 9.400z" fill="#d8d8d8"/>
  <path d="M1064 84q0-3 3-3h6q2 0 2 2v4" fill="none" stroke="#c4c4c4" stroke-width="1"/>
  <path d="M1064.600 89.800c2 .9 7.400 .9 9.200 0 .2 3.800-1.600 6.600-4.600 6.600s-4.800-2.800-4.600-6.600z" fill="#5e5e5e"/>
  <path d="M1065.500 87q4-3 7.500-.5" fill="none" stroke="#f4f4f4" stroke-width="1.300"/>
  <path d="M1078 97.500l3.500 1 .4 2.200" fill="none" stroke="#bababa" stroke-width="1.200"/>
</g>
<!-- ray 6 -->
<g>
  <path d="M1098 81h21v18.500h-3.500v-2h-14v2h-3.500z" fill="#a6a6a6"/>
  <path d="M1100.500 84h16v12h-16z" fill="#d8d8d8"/>
  <ellipse cx="1106" cy="81.200" rx="5" ry="1.400" fill="#efefef" stroke="#c0c0c0" stroke-width=".6"/>
  <path d="M1111.500 84.500v11.500M1114 84.500v11.500" stroke="#b8b8b8" stroke-width="1.300"/>
  <path d="M1099.800 88.400c2 .9 7.800 .9 9.600 0 .2 4-1.700 7.200-4.800 7.200s-5-3.200-4.800-7.200z" fill="#5e5e5e"/>
  <path d="M1100.500 86q4-2.500 8.500 0" fill="none" stroke="#f4f4f4" stroke-width="1.300"/>
</g>

</svg>


<!-- 3D VIEW -->
<div class="abs" id="viewborder"></div>
<div class="abs" id="view"></div>
<svg class="abs" style="left:352px;top:110px" width="848" height="519" viewBox="352 110 848 519">
  <g shape-rendering="crispEdges">
  <polygon points="540.8,305.7 760,211.5 1000,483 791.6,573.2" fill="#989898"/>
  <polygon points="540.8,305.7 791.6,573.2 537.5,436.3" fill="#868686"/>
  <g fill="none" stroke="#151515" stroke-width="1.800" stroke-linejoin="round" stroke-linecap="round">
    <polygon points="540.8,305.7 760,211.5 1000,483 791.6,573.2"/>
    <polygon points="540.8,305.7 791.6,573.2 537.5,436.3"/>
  </g>
  </g>
  <!-- axis cross -->
  <g stroke-width="1.600" fill="none">
    <path d="M1175.500 603.500L1160 610.800" stroke="#8b1a1a"/>
    <path d="M1175.500 603.500L1190 611.200" stroke="#1f8c2f"/>
    <path d="M1175.500 603.500V586" stroke="#1c1c9c"/>
  </g>
  <path d="M1174 592.500l1.500-3.500 1.500 3.500z" fill="#1c1c9c"/>
  <path d="M1183.200 609.300l4.400 .500-2.400-3.300z" fill="#1f8c2f"/>
  <g font-family="Liberation Sans, DejaVu Sans, sans-serif" font-size="9" fill="#111">
    <text x="1177.800" y="585.500">Z</text>
    <text x="1162" y="609.600">X</text>
    <text x="1191.600" y="610.800">Y</text>
  </g>
</svg>

<!-- COMBO VIEW -->
<div class="abs" style="left:347px;top:383px;width:3px;height:1px;background:#d5d2cf;box-shadow:0 3px 0 #d5d2cf,0 6px 0 #d5d2cf,0 1px 0 #fbfbfa,0 4px 0 #fbfbfa,0 7px 0 #fbfbfa;"></div>
<div class="abs lbl" style="left:5px;top:115px;font-size:14.5px;">Combo View</div>
<svg class="abs" style="left:332px;top:117px" width="11" height="11" viewBox="0 0 11 11"><rect x=".5" y=".5" width="10" height="10" rx="2" fill="#f6f5f4" stroke="#55534f"/><rect x="4.5" y="2.5" width="4" height="4" rx="1" fill="none" stroke="#55534f"/><rect x="2.5" y="4.5" width="4" height="4" rx="1" fill="#f6f5f4" stroke="#55534f"/></svg>

<!-- tabs -->
<div class="abs" style="left:4px;top:139px;width:58px;height:25px;box-sizing:border-box;border:1px solid #c9c6c3;border-bottom:none;border-radius:4px 4px 0 0;background:linear-gradient(#efeeec,#e1dfdc);"></div>
<div class="abs" id="frame"></div><div class="abs" id="frame2"></div><div class="abs" id="frame3"></div><div class="abs" id="frame4"></div>
<div class="abs" style="left:62px;top:135px;width:49px;height:30px;box-sizing:border-box;border:1px solid #c4c1bd;border-bottom:none;border-radius:4px 4px 0 0;background:#f9f9f8;"></div>
<div class="abs lbl" style="left:11px;top:142.6px;font-size:14.5px;letter-spacing:.55px;">Model</div>
<div class="abs lbl" style="left:69px;top:141.6px;font-size:14.5px;letter-spacing:-.45px;">Tasks</div>

<!-- buttons -->
<div class="abs btn" style="left:90px;top:185px;width:81px;background:linear-gradient(#fdfdfc,#ebe9e7);"><u>C</u>lose</div>
<div class="abs btn" style="left:179px;top:185px;width:82px;background:linear-gradient(#f9a88a,#f08a63);border-color:#c07a62;"><u>C</u>reate</div>

<!-- Geometric primitives -->
<div class="abs hdr" style="top:226px;"><span>Geometric Primitives</span></div>
<svg class="abs" style="left:317px;top:231px" width="16" height="16" viewBox="0 0 16 16"><circle cx="8" cy="8" r="7.1" fill="#f4f2f0"/><path d="M4.900 7.600L8 4.700l3.100 2.900M4.900 11.100L8 8.200l3.100 2.900" fill="none" stroke="#ee7747" stroke-width="1.300"/></svg>
<div class="abs" id="body1"></div>

<!-- combo -->
<div class="abs" style="left:29px;top:267px;width:291px;height:24px;box-sizing:border-box;border:1px solid #aaa7a3;border-radius:4px;background:linear-gradient(#fdfdfc,#ebe9e7);"></div>
<svg class="abs" style="left:34px;top:270px" width="17" height="17" viewBox="34 270 17 17"><defs><linearGradient id="bxf" x1="0" y1="0" x2="1" y2="1"><stop offset="0" stop-color="#3f7be6"/><stop offset="1" stop-color="#0b2a96"/></linearGradient></defs><path d="M35.700 273.800l3.800-1.800 8.700.6v9.400l-4.400 2.500-8.100-.9z" fill="#0b1d6a"/><path d="M35.700 273.800l8.100.9v9.800l-8.100-.9z" fill="url(#bxf)"/><path d="M35.700 273.800l3.800-1.800 8.700.6-4.400 2.100z" fill="#15348c"/><path d="M43.800 275.200v9.400M35.400 283.600l8.400 1 4.800-2.600" fill="none" stroke="#e8200c" stroke-width="1.100"/></svg>
<div class="abs lbl" style="left:54.5px;top:271.8px;letter-spacing:.4px;">Box</div>
<svg class="abs" style="left:307px;top:273px" width="8" height="14" viewBox="0 0 8 14"><path d="M1 5L4 2l3 3zM1 10.500L4 13.500l3-3z" fill="#4a4945"/></svg>

<div class="abs lbl" style="left:29px;top:301px;font-weight:bold;letter-spacing:.5px;">Parameter</div>
<div class="abs lbl" style="left:54.5px;top:337px;letter-spacing:.5px;">Length:</div>
<div class="abs lbl" style="left:54.5px;top:370px;letter-spacing:.7px;">Width:</div>
<div class="abs lbl" style="left:54.5px;top:402px;letter-spacing:.55px;">Height:</div>
<div class="abs spin" style="top:333px;"><span>10 mm</span><i></i></div>
<div class="abs spin" style="top:365.5px;"><span>10 mm</span><i></i></div>
<div class="abs spin" style="top:398px;"><span>10 mm</span><i></i></div>

<!-- Location -->
<div class="abs hdr" style="top:626px;"><span style="letter-spacing:.15px">Location</span></div>
<svg class="abs" style="left:316px;top:629.600px" width="16" height="16" viewBox="0 0 16 16"><circle cx="8" cy="8" r="7.1" fill="#f4f2f0"/><path d="M4.900 4.900L8 7.800l3.100-2.900M4.900 8.400L8 11.300l3.100-2.900" fill="none" stroke="#ee7747" stroke-width="1.300"/></svg>

<!-- MDI tab -->
<div class="abs" style="left:352px;top:629px;width:289px;height:32px;box-sizing:border-box;border:1px solid #c5c2bf;border-top:none;border-radius:0 0 4px 4px;background:#f7f6f5;"></div>
<div class="abs lbl" style="left:381.500px;top:638.300px;letter-spacing:.27px;">T06-ejemplo-plano-inclinado-ini : 1</div>
<svg class="abs" style="left:352px;top:632px" width="30" height="26" viewBox="352 632 30 26">
<defs><linearGradient id="fr" x1="0" y1="0" x2="1" y2="1"><stop offset="0" stop-color="#ff1800"/><stop offset=".5" stop-color="#ff4a08"/><stop offset="1" stop-color="#d62a00"/></linearGradient>
<radialGradient id="gb" cx=".3" cy=".3" r=".8"><stop offset="0" stop-color="#4a86e0"/><stop offset=".6" stop-color="#1236a4"/><stop offset="1" stop-color="#061a78"/></radialGradient></defs>
<path d="M359 638.200h7.500v2.700h-4.700v2.500h2.900v2.200h-2.900v4.600h-2.800z" fill="url(#fr)"/>
<path d="M367.48 640.51L369.05 640.65L369.03 642.52L369.60 642.78L371.02 641.56L372.14 642.68L370.92 644.10L371.18 644.67L373.05 644.65L373.19 646.22L371.35 646.53L371.18 647.13L372.63 648.31L371.72 649.61L370.11 648.66L369.60 649.02L369.95 650.85L368.42 651.26L367.80 649.50L367.17 649.45L366.26 651.08L364.82 650.41L365.49 648.66L365.04 648.21L363.29 648.88L362.62 647.44L364.25 646.53L364.20 645.90L362.44 645.28L362.85 643.75L364.68 644.10L365.04 643.59L364.09 641.98L365.39 641.07L366.57 642.52L367.17 642.35Z" fill="url(#gb)"/>
<circle cx="367.8" cy="645.9" r="1.750" fill="#fdfdfd"/>
</svg>
<svg class="abs" style="left:616px;top:640px" width="14" height="13" viewBox="0 0 14 13"><path d="M2.400 2.200l8.800 8.600M11.200 2.200l-8.800 8.600" stroke="#4b4a46" stroke-width="3" fill="none"/></svg>

<!-- status bar -->
<div class="abs" style="left:3px;top:661px;width:1197px;height:1px;background:#dddbd8;"></div>
<div class="abs lbl" style="left:1055px;top:669px;letter-spacing:.14px;">113.75 x 69.46 mm</div>
<svg class="abs" style="left:1186px;top:676px" width="14" height="14" viewBox="0 0 14 14"><g fill="#dcdad7"><rect x="10" y="2" width="2" height="2"/><rect x="7" y="5" width="2" height="2"/><rect x="10" y="5" width="2" height="2"/><rect x="4" y="8" width="2" height="2"/><rect x="7" y="8" width="2" height="2"/><rect x="10" y="8" width="2" height="2"/><rect x="1" y="11" width="2" height="2"/><rect x="4" y="11" width="2" height="2"/><rect x="7" y="11" width="2" height="2"/><rect x="10" y="11" width="2" height="2"/></g></svg>
</body>
</html>
